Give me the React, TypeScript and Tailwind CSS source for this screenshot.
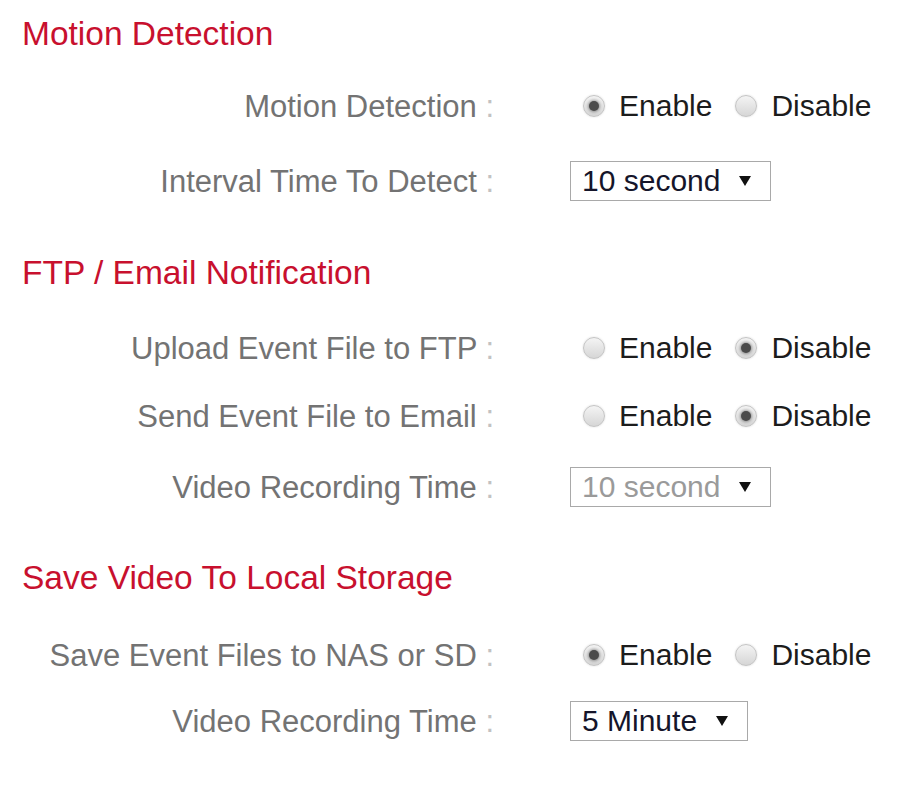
import React from "react";

type RadioProps = {
  checked: boolean;
  label: string;
};

function Radio({ checked, label }: RadioProps) {
  return (
    <span className="flex items-center">
      <span className="flex h-[22px] w-[22px] items-center justify-center rounded-full border border-[#c4c4c4] bg-gradient-to-b from-[#f4f4f4] to-[#d6d6d6] shadow-[0_0_2px_rgba(0,0,0,0.15)]">
        {checked && (
          <span className="h-[10px] w-[10px] rounded-full bg-[#4a4a4a] shadow-[0_0_3px_1px_rgba(60,60,60,0.5)]" />
        )}
      </span>
      <span className="ml-[14px] text-[#1c1c1c]">{label}</span>
    </span>
  );
}

function RadioPair({ enabled }: { enabled: boolean }) {
  return (
    <div className="ml-[13px] flex items-center gap-[23px]">
      <Radio checked={enabled} label="Enable" />
      <Radio checked={!enabled} label="Disable" />
    </div>
  );
}

type SelectProps = {
  value: string;
  disabled?: boolean;
};

function Select({ value, disabled }: SelectProps) {
  return (
    <div className="flex h-[40px] items-center border border-[#a9a9a9] bg-white pl-[11px] pr-[19px]">
      <span className={disabled ? "text-[#9a9a9a]" : "text-[#15152a]"}>
        {value}
      </span>
      <svg className="ml-[19px]" width="12" height="10" viewBox="0 0 12 10">
        <polygon points="0,0 12,0 6,10" fill="#111" />
      </svg>
    </div>
  );
}

type RowProps = {
  label: string;
  className: string;
  children: React.ReactNode;
};

function Row({ label, className, children }: RowProps) {
  return (
    <div className={`flex h-[44px] items-center ${className}`}>
      <div className="w-[494px] text-right text-[31px] text-[#737373]">
        {label}
        <span className="text-[#c2c2c2]"> :</span>
      </div>
      <div className="ml-[76px] flex items-center">{children}</div>
    </div>
  );
}

function Heading({ title, className }: { title: string; className: string }) {
  return (
    <h2
      className={`flex h-[48px] items-center pl-[22px] text-[33.5px] text-[#c8102e] ${className}`}
    >
      {title}
    </h2>
  );
}

export default function App() {
  return (
    <div className="min-h-[788px] w-[909px] bg-white font-['Liberation_Sans',Arial,sans-serif] text-[30px] leading-none">
      <div className="flex flex-col pb-[40px]">
        <Heading title="Motion Detection" className="mt-[10px]" />
        <Row label="Motion Detection" className="mt-[26px]">
          <RadioPair enabled />
        </Row>
        <Row label="Interval Time To Detect" className="mt-[31px]">
          <Select value="10 second" />
        </Row>

        <Heading title="FTP / Email Notification" className="mt-[46px]" />
        <Row label="Upload Event File to FTP" className="mt-[29px]">
          <RadioPair enabled={false} />
        </Row>
        <Row label="Send Event File to Email" className="mt-[24px]">
          <RadioPair enabled={false} />
        </Row>
        <Row label="Video Recording Time" className="mt-[27px]">
          <Select value="10 second" disabled />
        </Row>

        <Heading title="Save Video To Local Storage" className="mt-[45px]" />
        <Row label="Save Event Files to NAS or SD" className="mt-[31px]">
          <RadioPair enabled />
        </Row>
        <Row label="Video Recording Time" className="mt-[22px]">
          <Select value="5 Minute" />
        </Row>
      </div>
    </div>
  );
}
